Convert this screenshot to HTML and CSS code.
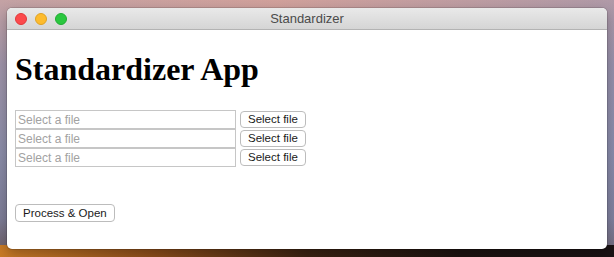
FILE: index.html
```html
<!DOCTYPE html>
<html>
<head>
<meta charset="utf-8">
<title>Standardizer</title>
<link rel="stylesheet" href="styles.css">
</head>
<body>
<div class="window">
  <div class="titlebar">
    <div class="lights">
      <span class="light red"></span>
      <span class="light yellow"></span>
      <span class="light green"></span>
    </div>
    <div class="title">Standardizer</div>
    <div></div>
  </div>
  <div class="content">
    <h1 class="heading">Standardizer App</h1>
    <div class="files">
      <div class="row"><input class="path" type="text" placeholder="Select a file"><button class="btn">Select file</button></div>
      <div class="row"><input class="path" type="text" placeholder="Select a file"><button class="btn">Select file</button></div>
      <div class="row"><input class="path" type="text" placeholder="Select a file"><button class="btn">Select file</button></div>
    </div>
    <button class="btn process">Process &amp; Open</button>
  </div>
</div>
</body>
</html>
```
FILE: styles.css
```css
html, body {
  margin: 0;
  height: 257px;
  overflow: hidden;
}
body {
  box-sizing: border-box;
  padding: 8px 7px 8px 7px;
  display: flex;
  background:
    linear-gradient(90deg, #c77a26 0%, #8a4c1a 25%, #3a2212 50%, #1c1210 75%, #1a1214 100%) bottom / 100% 12px no-repeat,
    linear-gradient(90deg, rgba(200,160,165,0.0) 0%, rgba(225,160,145,0.45) 45%, rgba(130,135,175,0.3) 100%),
    linear-gradient(180deg, #c4a2a4 0%, #9e93a8 25%, #8a8ca8 60%, #7c7c96 85%, #6a5a60 100%);
  font-family: "Liberation Sans", Arial, sans-serif;
}
.window {
  flex: 1;
  display: flex;
  flex-direction: column;
  background: #ffffff;
  border-radius: 5px;
  overflow: hidden;
  box-shadow: 0 0 0 1px rgba(0,0,0,0.12), 0 4px 12px rgba(0,0,0,0.25);
}
.titlebar {
  height: 21px;
  flex: none;
  display: grid;
  grid-template-columns: 1fr auto 1fr;
  align-items: center;
  background: linear-gradient(180deg, #e9e9e9 0%, #d5d5d5 100%);
  border-bottom: 1px solid #b3b3b3;
}
.lights {
  display: flex;
  gap: 8px;
  padding-left: 8px;
}
.light {
  width: 12px;
  height: 12px;
  border-radius: 50%;
  box-sizing: border-box;
}
.red { background: #fc4a4c; border: 1px solid #e0393b; }
.yellow { background: #fdbb2d; border: 1px solid #dea224; }
.green { background: #2ac73f; border: 1px solid #21ab33; }
.title {
  font-size: 13px;
  color: #4b4b4b;
}
.content {
  padding: 0 8px;
}
.heading {
  font-family: "Liberation Serif", "Times New Roman", serif;
  font-size: 32px;
  font-weight: bold;
  margin: 21px 0 22px 0;
  color: #000;
}
.files {
  display: flex;
  flex-direction: column;
}
.row {
  display: flex;
  align-items: center;
  gap: 4px;
  height: 19px;
}
.path {
  width: 221px;
  height: 19px;
  box-sizing: border-box;
  margin: 0;
  border: 1px solid #c6c6c6;
  padding: 0 2px;
  font-family: "Liberation Sans", Arial, sans-serif;
  font-size: 12px;
  color: #000;
  outline: none;
}
.path::placeholder {
  color: #a2a2a2;
}
.btn {
  height: 17px;
  box-sizing: border-box;
  margin: 0;
  padding: 0 7px;
  background: #ffffff;
  border: 1px solid #bcbcbc;
  border-radius: 4px;
  font-family: "Liberation Sans", Arial, sans-serif;
  font-size: 11.5px;
  line-height: 15px;
  color: #1a1a1a;
}
.process {
  margin-top: 37px;
  height: 18px;
  padding: 0 7px;
}
```
